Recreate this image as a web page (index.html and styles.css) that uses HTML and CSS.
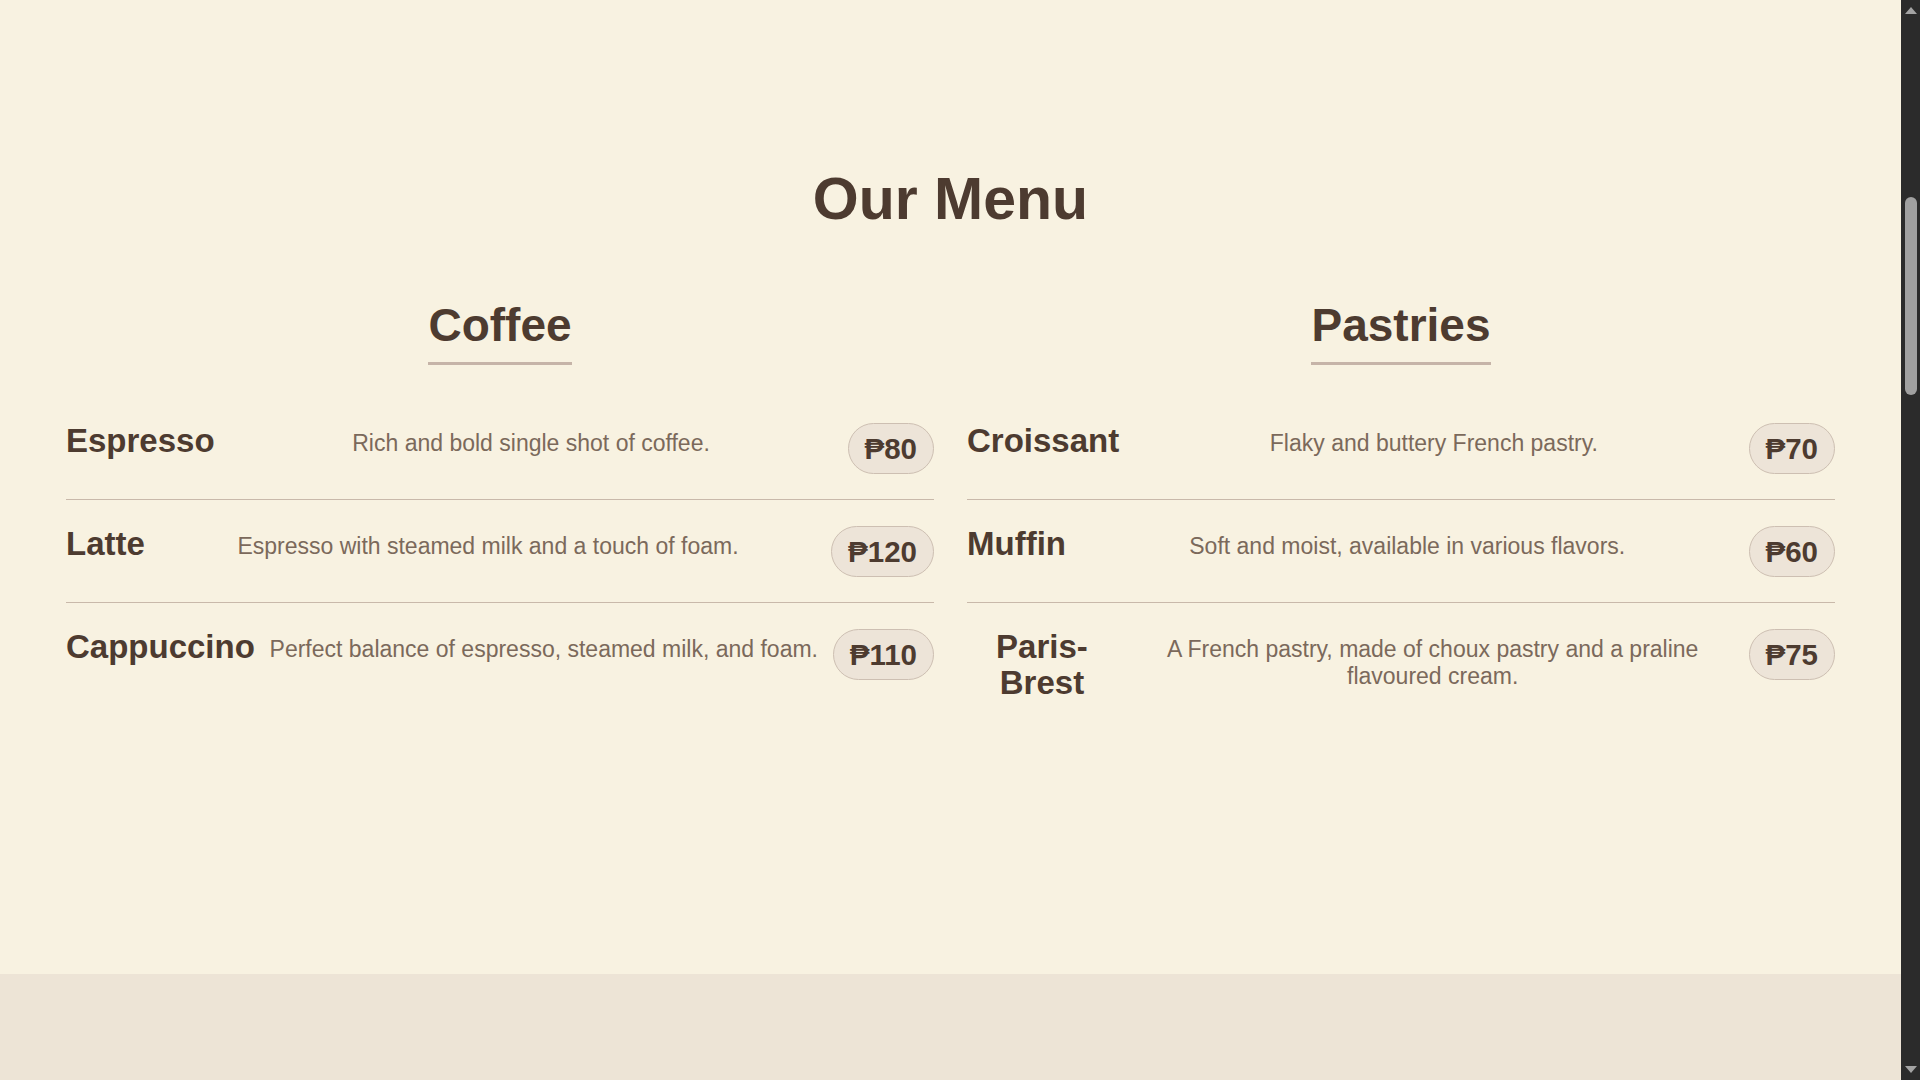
FILE: index.html
```html
<!DOCTYPE html>
<html lang="en">
<head>
<meta charset="utf-8">
<title>Our Menu</title>
<link rel="stylesheet" href="styles.css">
</head>
<body>
<div class="window">
  <main class="page">
    <section class="menu">
      <h1 class="menu-title">Our Menu</h1>
      <div class="menu-grid">
        <div class="category">
          <h2 class="category-title">Coffee</h2>
          <ul class="items">
            <li class="item">
              <h3 class="item-name">Espresso</h3>
              <p class="item-desc">Rich and bold single shot of coffee.</p>
              <span class="item-price">₱80</span>
            </li>
            <li class="item">
              <h3 class="item-name">Latte</h3>
              <p class="item-desc">Espresso with steamed milk and a touch of foam.</p>
              <span class="item-price">₱120</span>
            </li>
            <li class="item">
              <h3 class="item-name">Cappuccino</h3>
              <p class="item-desc">Perfect balance of espresso, steamed milk, and foam.</p>
              <span class="item-price">₱110</span>
            </li>
          </ul>
        </div>
        <div class="category">
          <h2 class="category-title">Pastries</h2>
          <ul class="items">
            <li class="item">
              <h3 class="item-name">Croissant</h3>
              <p class="item-desc">Flaky and buttery French pastry.</p>
              <span class="item-price">₱70</span>
            </li>
            <li class="item">
              <h3 class="item-name">Muffin</h3>
              <p class="item-desc">Soft and moist, available in various flavors.</p>
              <span class="item-price">₱60</span>
            </li>
            <li class="item">
              <h3 class="item-name">Paris-Brest</h3>
              <p class="item-desc">A French pastry, made of choux pastry and a praline flavoured cream.</p>
              <span class="item-price">₱75</span>
            </li>
          </ul>
        </div>
      </div>
    </section>
    <footer class="next-section"></footer>
  </main>
  <div class="scrollbar" aria-hidden="true">
    <span class="scroll-arrow up"></span>
    <div class="scroll-track">
      <span class="scroll-thumb"></span>
    </div>
    <span class="scroll-arrow down"></span>
  </div>
</div>
</body>
</html>
```
FILE: styles.css
```css
* { box-sizing: border-box; }

html, body {
  margin: 0;
  padding: 0;
  height: 100%;
  overflow: hidden;
}

body {
  font-family: "Liberation Sans", Arial, sans-serif;
  background: #f8f2e1;
  color: #4d3b30;
}

.window {
  display: flex;
  height: 1080px;
}

.page {
  flex: 1;
  display: flex;
  flex-direction: column;
  min-width: 0;
}

.menu {
  height: 974px;
  padding: 165px 66px 0;
  background: #f8f2e1;
}

.menu-title {
  margin: 0 0 65px;
  text-align: center;
  font-size: 59px;
  font-weight: 700;
  color: #4d3b30;
}

.menu-grid {
  display: grid;
  grid-template-columns: 1fr 1fr;
  column-gap: 33px;
}

.category {
  display: flex;
  flex-direction: column;
  align-items: center;
}

.category-title {
  margin: 0 0 32px;
  padding-bottom: 10px;
  border-bottom: 3px solid #c6b4a8;
  font-size: 46px;
  font-weight: 700;
  color: #4d3b30;
}

.items {
  list-style: none;
  margin: 0;
  padding: 0;
  width: 100%;
}

.item {
  display: flex;
  align-items: flex-start;
  gap: 14px;
  padding: 25.5px 0;
  border-bottom: 1px solid #c9b9aa;
}

.item:last-child {
  border-bottom: none;
}

.item-name {
  flex: 0 1 auto;
  margin: 0;
  font-size: 33px;
  line-height: 36.8px;
  font-weight: 700;
  text-align: center;
  color: #4d3b30;
}

.item-desc {
  flex: 1 1 auto;
  margin: 7.5px 0 0;
  font-size: 23px;
  line-height: 27px;
  text-align: center;
  color: #7b695b;
}

.item-price {
  flex: 0 0 auto;
  padding: 8px 16px;
  border: 1px solid #cdbfb2;
  border-radius: 999px;
  background: #ede4d8;
  font-size: 29.5px;
  line-height: 33px;
  font-weight: 700;
  white-space: nowrap;
  color: #4d3b30;
}

.next-section {
  flex: 1;
  background: #ede4d6;
}

/* imitation of the browser's dark scrollbar */
.scrollbar {
  width: 19px;
  flex: 0 0 19px;
  background: #2b2b2b;
  display: flex;
  flex-direction: column;
  align-items: center;
}

.scroll-arrow {
  width: 0;
  height: 0;
  border-left: 6px solid transparent;
  border-right: 6px solid transparent;
}

.scroll-arrow.up {
  margin-top: 7px;
  border-bottom: 7px solid #a3a3a3;
}

.scroll-arrow.down {
  margin-bottom: 7px;
  border-top: 7px solid #a3a3a3;
}

.scroll-track {
  flex: 1;
  width: 100%;
  display: flex;
  justify-content: center;
  padding-top: 183px;
}

.scroll-thumb {
  width: 12px;
  height: 198px;
  border-radius: 6px;
  background: #a0a0a0;
}
```
